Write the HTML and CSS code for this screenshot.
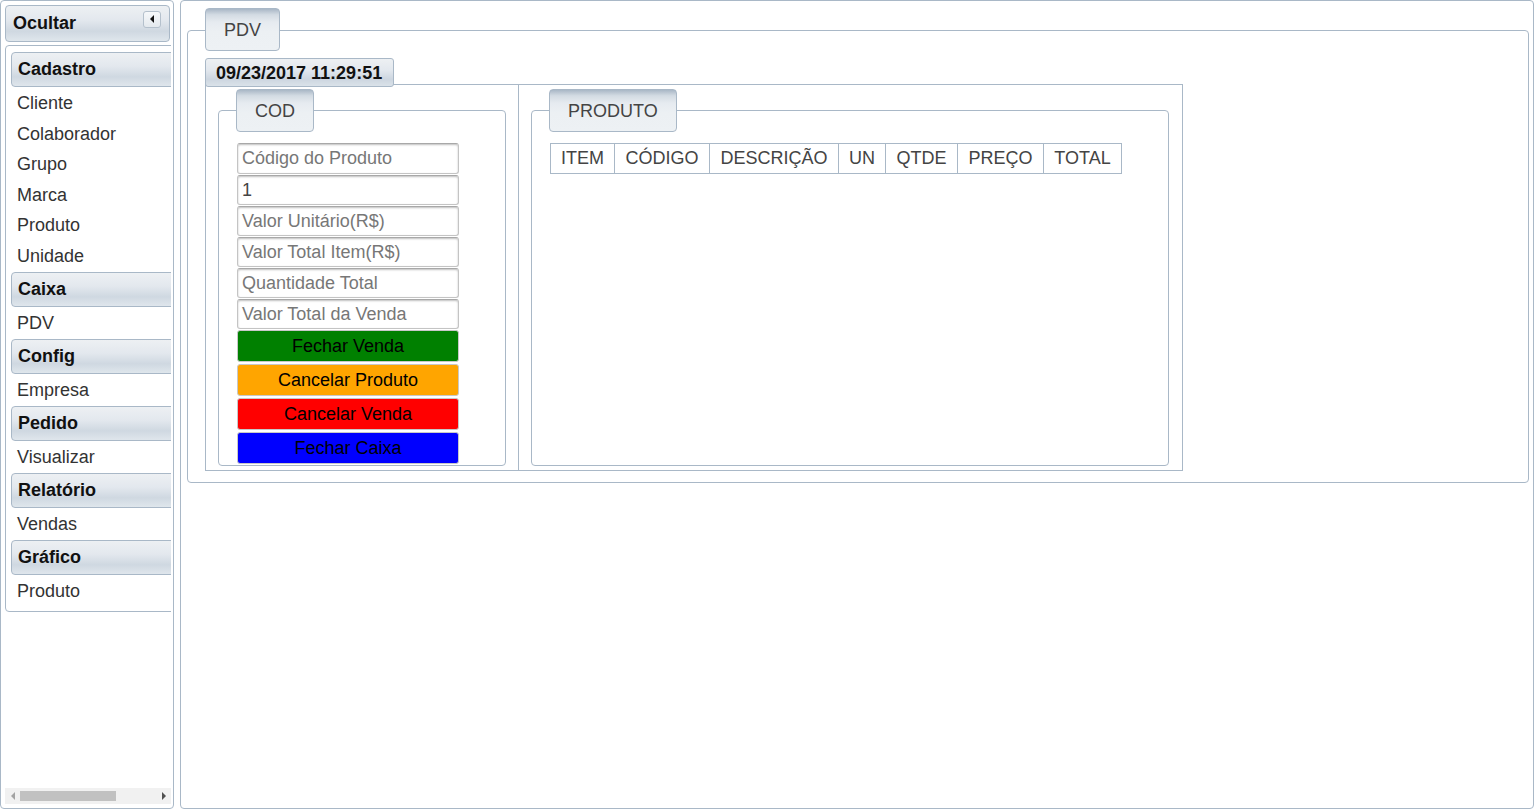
FILE: index.html
```html
<!DOCTYPE html>
<html lang="pt">
<head>
<meta charset="utf-8">
<title>PDV</title>
<link rel="stylesheet" href="styles.css">
</head>
<body>
<div class="app">
  <aside class="side">
    <div class="side-head">
      <span>Ocultar</span>
      <span class="toggle"><svg width="6" height="8" viewBox="0 0 6 8"><path d="M5 0 L1 4 L5 8 Z" fill="#111"/></svg></span>
    </div>
    <div class="side-scroll">
      <div class="side-view">
        <div class="menu">
          <div class="acc-head">Cadastro</div>
          <ul class="acc-list">
            <li>Cliente</li><li>Colaborador</li><li>Grupo</li><li>Marca</li><li>Produto</li><li>Unidade</li>
          </ul>
          <div class="acc-head">Caixa</div>
          <ul class="acc-list"><li>PDV</li></ul>
          <div class="acc-head">Config</div>
          <ul class="acc-list"><li>Empresa</li></ul>
          <div class="acc-head">Pedido</div>
          <ul class="acc-list"><li>Visualizar</li></ul>
          <div class="acc-head">Relatório</div>
          <ul class="acc-list"><li>Vendas</li></ul>
          <div class="acc-head">Gráfico</div>
          <ul class="acc-list"><li>Produto</li></ul>
        </div>
      </div>
      <div class="hscroll">
        <span class="arr arr-l"></span>
        <span class="thumb"></span>
        <span class="arr arr-r"></span>
      </div>
    </div>
  </aside>

  <main class="main">
    <div class="group">
      <div class="tab">PDV</div>
      <div class="box pdv-box">
        <div class="date">09/23/2017 11:29:51</div>
        <div class="grid">
          <div class="cell cell-left">
            <div class="group grow">
              <div class="tab">COD</div>
              <div class="box inner-box cod-box">
                <div class="field placeholder first">Código do Produto</div>
                <div class="field value">1</div>
                <div class="field placeholder">Valor Unitário(R$)</div>
                <div class="field placeholder">Valor Total Item(R$)</div>
                <div class="field placeholder">Quantidade Total</div>
                <div class="field placeholder">Valor Total da Venda</div>
                <button class="btn btn-green">Fechar Venda</button>
                <button class="btn btn-orange">Cancelar Produto</button>
                <button class="btn btn-red">Cancelar Venda</button>
                <button class="btn btn-blue">Fechar Caixa</button>
              </div>
            </div>
          </div>
          <div class="cell cell-right">
            <div class="group grow">
              <div class="tab">PRODUTO</div>
              <div class="box inner-box prod-box">
                <table class="items">
                  <tr>
                    <th class="c-item">ITEM</th>
                    <th class="c-cod">CÓDIGO</th>
                    <th class="c-desc">DESCRIÇÃO</th>
                    <th class="c-un">UN</th>
                    <th class="c-qtde">QTDE</th>
                    <th class="c-preco">PREÇO</th>
                    <th class="c-total">TOTAL</th>
                  </tr>
                </table>
              </div>
            </div>
          </div>
        </div>
      </div>
    </div>
  </main>
</div>
</body>
</html>
```

FILE: styles.css
```css
* { box-sizing: border-box; }

html, body {
  margin: 0;
  padding: 0;
  background: #ffffff;
}

body {
  font-family: "Liberation Sans", Arial, sans-serif;
  font-size: 18px;
  color: #333;
}

.app {
  display: flex;
  gap: 6px;
  height: 809px;
  width: 1534px;
}

/* ---------- sidebar ---------- */
.side {
  width: 174px;
  flex: none;
  border: 1px solid #a9b8c7;
  border-radius: 4px;
  padding: 4px 3px 4px 4px;
  display: flex;
  flex-direction: column;
}

.side-head {
  height: 37px;
  border: 1px solid #a9b8c7;
  border-radius: 4px;
  background: linear-gradient(to bottom, #edf0f3 0%, #e3e8ee 40%, #cfd8e1 72%, #dfe6ec 100%);
  display: flex;
  align-items: center;
  justify-content: space-between;
  padding: 0 8px 0 7px;
  font-weight: bold;
  color: #111;
}

.toggle {
  width: 18px;
  height: 17px;
  border: 1px solid #b4c0cc;
  border-radius: 3px;
  background: linear-gradient(to bottom, #f6f8fa, #e4e9ee);
  display: flex;
  align-items: center;
  justify-content: center;
  margin-top: -9px;
}

.side-scroll {
  margin-top: 3px;
  width: 166px;
  flex: 1;
  display: flex;
  flex-direction: column;
}

.side-view {
  flex: 1;
  overflow: hidden;
}

.menu {
  width: 190px;
  border: 1px solid #a9b8c7;
  border-radius: 4px;
  padding: 6px 0 4px 5px;
}

.acc-head {
  height: 35px;
  border: 1px solid #a9b8c7;
  border-radius: 4px;
  background: linear-gradient(to bottom, #edf0f3 0%, #e3e8ee 40%, #cfd8e1 72%, #dfe6ec 100%);
  padding: 0 0 0 6px;
  line-height: 33px;
  font-weight: bold;
  color: #111;
}

.acc-list {
  list-style: none;
  margin: 0;
  padding: 1px 0 0.4px 0;
}

.acc-list li {
  line-height: 30.6px;
  padding-left: 6px;
  color: #333;
}

.hscroll {
  height: 16px;
  margin-top: auto;
  background: #f1f1f1;
  display: flex;
  align-items: center;
}

.arr {
  width: 0;
  height: 0;
  border-top: 4px solid transparent;
  border-bottom: 4px solid transparent;
}

.arr-l {
  border-right: 4px solid #a3a3a3;
  margin-left: 6px;
}

.arr-r {
  border-left: 4px solid #505050;
  margin-left: auto;
  margin-right: 5px;
}

.thumb {
  width: 96px;
  height: 10px;
  background: #c1c1c1;
  margin-left: 5px;
}

/* ---------- main ---------- */
.main {
  width: 1354px;
  flex: none;
  border: 1px solid #a9b8c7;
  border-radius: 4px;
  padding: 7px 4px 0 6px;
}

.group {
  display: flex;
  flex-direction: column;
}

.grow { flex: 1; }

.tab {
  align-self: flex-start;
  position: relative;
  z-index: 1;
  height: 43px;
  padding: 2px 18px 0 18px;
  line-height: 39px;
  border: 1px solid #a9b8c7;
  border-radius: 4px;
  background: linear-gradient(to bottom, #a9b7c6 0%, #d3dbe3 14%, #e6ebf0 32%, #ecf0f3 55%, #edf1f4 100%);
  color: #444;
  margin-left: 18px;
}

.box {
  border: 1px solid #a9b8c7;
  border-radius: 4px;
  margin-top: -22px;
}

.pdv-box {
  margin-top: -21px;
  height: 453px;
  padding: 27px 0 0 17px;
}

.date {
  display: inline-block;
  position: relative;
  z-index: 1;
  height: 29px;
  padding: 1px 11px 0 10px;
  line-height: 26px;
  border: 1px solid #a9b8c7;
  border-radius: 3px;
  background: linear-gradient(to bottom, #edf0f3 0%, #e3e8ee 40%, #cdd6e0 75%, #dae2e9 100%);
  font-weight: bold;
  color: #111;
}

.grid {
  margin-top: -3px;
  width: 978px;
  border: 1px solid #a9b8c7;
  display: flex;
}

.cell {
  display: flex;
  flex-direction: column;
  padding: 4px 12px 4px 12px;
}

.cell-left {
  width: 313px;
  border-right: 1px solid #a9b8c7;
}

.cell-right {
  flex: 1;
  padding-right: 13px;
}

.inner-box { flex: 1; }

.cod-box {
  padding: 32px 0 1px 18px;
}

.field {
  width: 222px;
  height: 30px;
  margin-bottom: 1px;
  border: 1px solid #c4c4c4;
  border-top-color: #a8a8a8;
  border-radius: 3px;
  box-shadow: inset 0 1px 2px rgba(0,0,0,0.25);
  padding-left: 4px;
  line-height: 28px;
  background: #fff;
}

.field.first { height: 31px; }

.placeholder { color: #777; }
.value { color: #444; }

.btn {
  display: block;
  width: 222px;
  height: 32px;
  margin: 0 0 2px 0;
  border: 1px solid #c8c8c8;
  border-radius: 3px;
  font-family: "Liberation Sans", Arial, sans-serif;
  font-size: 18px;
  color: #000;
  padding: 0;
  line-height: 30px;
  text-align: center;
}

.btn-green { background: #008000; }
.btn-orange { background: #ffa500; }
.btn-red { background: #ff0000; }
.btn-blue { background: #0000ff; margin-bottom: 0; }

.prod-box {
  padding: 32px 0 0 18px;
}

.items {
  border-collapse: collapse;
  table-layout: fixed;
}

.items th {
  border: 1px solid #a9b8c7;
  height: 30px;
  padding: 0;
  font-weight: normal;
  color: #444;
  white-space: nowrap;
  text-align: center;
}

.c-item { width: 64px; }
.c-cod { width: 95px; }
.c-desc { width: 129px; }
.c-un { width: 47px; }
.c-qtde { width: 72px; }
.c-preco { width: 86px; }
.c-total { width: 78px; }
```
